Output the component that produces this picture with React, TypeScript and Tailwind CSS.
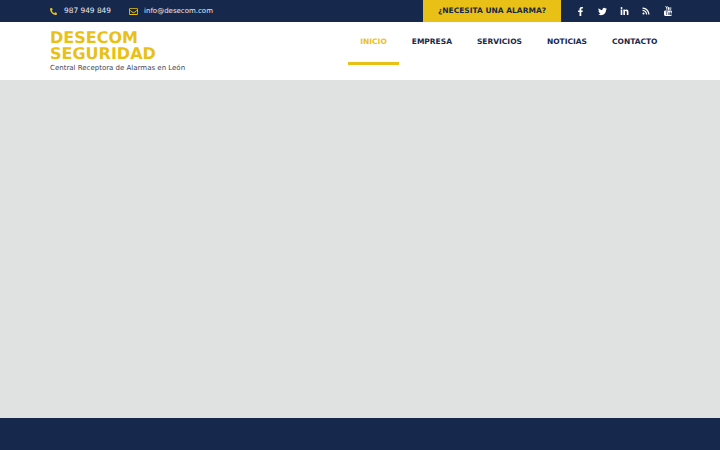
import { FaFacebookF, FaLinkedinIn, FaPhoneAlt, FaRegEnvelope, FaRss, FaTwitter } from "react-icons/fa";

const navItems = ["INICIO", "EMPRESA", "SERVICIOS", "NOTICIAS", "CONTACTO"];

function YoutubeIcon() {
  return (
    <svg width="8" height="10" viewBox="0 0 18 22" fill="currentColor">
      <path d="M3 0h1.600l1 3.200L6.700 0h1.600L6.400 5v3.400H4.900V5zM9.900 2.200c1.100 0 1.700.7 1.700 1.700v2.900c0 1-.6 1.700-1.700 1.700S8.200 7.800 8.200 6.800V3.900c0-1 .6-1.700 1.700-1.700zM12.500 2.300h1.400v4.900c.4 0 .8-.5 1-.8V2.300h1.400v6.100h-1.400v-.7c-.5.500-1 .8-1.500.8-.7 0-.9-.5-.9-1.200z" />
      <path fillRule="evenodd" d="M3 10h12c1.600 0 3 1.300 3 3v6c0 1.700-1.400 3-3 3H3c-1.600 0-3-1.300-3-3v-6c0-1.700 1.400-3 3-3zm1 2v1.500H5.500V20H7v-6.500h1.500V12zm5 2v5c0 .6.800.9 2.200-.1v1h1.300V14h-1.300v4.200c-.5.500-1 .6-1 .2V14zm5-2v8h1.300c1.300.3 2-.1 2-1.300v-3c0-1.300-1-1.800-2-1V12z" />
    </svg>
  );
}

const socials = [
  <FaFacebookF key="facebook" size={9} />,
  <FaTwitter key="twitter" size={9} />,
  <FaLinkedinIn key="linkedin" size={9} />,
  <FaRss key="rss" size={8} />,
  <YoutubeIcon key="youtube" />,
];

export default function App() {
  return (
    <div className="flex h-[450px] flex-col overflow-hidden bg-white font-['DejaVu_Sans',sans-serif] [text-rendering:geometricPrecision]">
      <div className="flex h-[22px] shrink-0 items-stretch bg-[#16284c] pl-[50px] pr-[41px] text-white">
        <div className="flex items-center">
          <FaPhoneAlt className="text-[#e9c116]" size={7} />
          <span className="ml-[7px] w-[47px] whitespace-nowrap text-[7.4px] text-[#e8eaee]">987 949 849</span>
          <FaRegEnvelope className="ml-[18px] text-[#e9c116]" size={9} />
          <span className="ml-[6px] whitespace-nowrap text-[7px] text-[#e8eaee]">info@desecom.com</span>
        </div>
        <a className="ml-auto flex w-[138px] items-center justify-center bg-[#e9c116] text-[7.5px] font-bold text-[#16284c]">
          ¿NECESITA UNA ALARMA?
        </a>
        <div className="ml-[8px] flex items-center">
          {socials.map((icon) => (
            <span key={icon.key} className="flex w-[22px] justify-center">
              {icon}
            </span>
          ))}
        </div>
      </div>

      <header className="flex h-[58px] shrink-0 justify-between pl-[50px] pr-[50px]">
        <div className="pt-[8px]">
          <div className="w-[120px] text-[16px] font-bold leading-[16px] text-[#e9c116]">
            DESECOM SEGURIDAD
          </div>
          <div className="mt-[1px] text-[7px] leading-[10px] text-[#3d4656]">
            Central Receptora de Alarmas en León
          </div>
        </div>
        <nav className="flex items-start">
          {navItems.map((item, i) => (
            <a
              key={item}
              className={`flex h-[43px] items-start border-b-[3px] px-[12.5px] pt-[15px] text-[7.5px] font-bold leading-[10px] ${
                i === 0 ? "border-[#e9c116] text-[#e9c116]" : "border-transparent text-[#16284c]"
              }`}
            >
              {item}
            </a>
          ))}
        </nav>
      </header>

      <main className="flex-1 bg-[#e0e2e1]" />

      <footer className="h-[32px] shrink-0 bg-[#16284c]" />
    </div>
  );
}
